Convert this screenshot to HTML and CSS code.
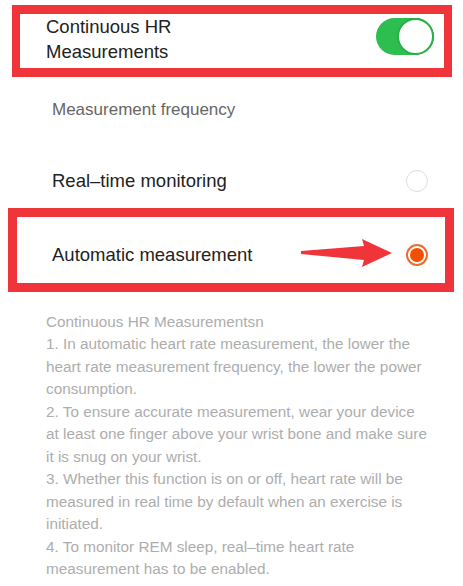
FILE: index.html
```html
<!DOCTYPE html>
<html lang="en">
<head>
<meta charset="utf-8">
<title>Continuous HR Measurements</title>
<link rel="stylesheet" href="styles.css">
</head>
<body>
<div class="page">
  <div class="hr-box">
    <div class="hr-title">Continuous HR<br>Measurements</div>
    <div class="toggle"><span class="knob"></span></div>
  </div>

  <div class="freq-label">Measurement frequency</div>

  <div class="option">
    <span class="option-label">Real–time monitoring</span>
    <span class="radio"></span>
  </div>

  <div class="auto-box">
    <div class="option option-inner">
      <span class="option-label">Automatic measurement</span>
      <svg class="arrow" width="92" height="30" viewBox="0 0 92 30">
        <polygon points="0,12 63,7 61,0 91,14 61,28 63,21 0,15" fill="#f0353a"/>
      </svg>
      <span class="radio radio-on"></span>
    </div>
  </div>

  <p class="desc">Continuous HR Measurementsn<br>1. In automatic heart rate measurement, the lower the<br>heart rate measurement frequency, the lower the power<br>consumption.<br>2. To ensure accurate measurement, wear your device<br>at least one finger above your wrist bone and make sure<br>it is snug on your wrist.<br>3. Whether this function is on or off, heart rate will be<br>measured in real time by default when an exercise is<br>initiated.<br>4. To monitor REM sleep, real–time heart rate<br>measurement has to be enabled.</p>
</div>
</body>
</html>
```

FILE: styles.css
```css
html, body {
  margin: 0;
  padding: 0;
  background: #ffffff;
}

.page {
  width: 463px;
  font-family: "Liberation Sans", Arial, sans-serif;
  color: #222222;
  overflow: hidden;
}

.hr-box {
  margin: 5px 11px 0 12px;
  border-style: solid;
  border-color: #f0353a;
  border-width: 9px 8px;
  height: 54px;
  padding: 0 10px 0 26px;
  display: flex;
  justify-content: space-between;
  align-items: flex-start;
}

.hr-title {
  font-size: 18.5px;
  line-height: 25px;
  color: #222222;
}

.toggle {
  margin-top: 4px;
  width: 58px;
  height: 37px;
  border-radius: 19px;
  background: #2ebd4f;
  display: flex;
  justify-content: flex-end;
}

.knob {
  width: 37px;
  height: 37px;
  box-sizing: border-box;
  border-radius: 50%;
  background: #ffffff;
  border: 2px solid #2aae48;
}

.freq-label {
  margin-top: 23px;
  padding-left: 52px;
  font-size: 17px;
  line-height: 20px;
  color: #666666;
}

.option {
  margin-top: 48px;
  padding: 0 35px 0 52px;
  height: 26px;
  display: flex;
  align-items: center;
}

.option-label {
  font-size: 18.5px;
  line-height: 26px;
  color: #222222;
  flex: 1;
}

.radio {
  width: 22px;
  height: 22px;
  box-sizing: border-box;
  border-radius: 50%;
  border: 1.5px solid #dddddd;
}

.auto-box {
  margin: 14px 9px 0 8px;
  border: 9px solid #f0353a;
  padding: 25px 0 15px;
}

.option-inner {
  margin-top: 0;
  padding: 0 17px 0 35px;
}

.arrow {
  display: block;
  margin-top: -2px;
}

.radio-on {
  margin-left: 13px;
  border: 2px solid #ee6b2c;
  padding: 2px;
  background: #f25000;
  background-clip: content-box;
}

.desc {
  margin: 19px 0 0;
  padding-left: 46px;
  font-size: 15.3px;
  line-height: 22.45px;
  color: #adadad;
  white-space: nowrap;
}
```
